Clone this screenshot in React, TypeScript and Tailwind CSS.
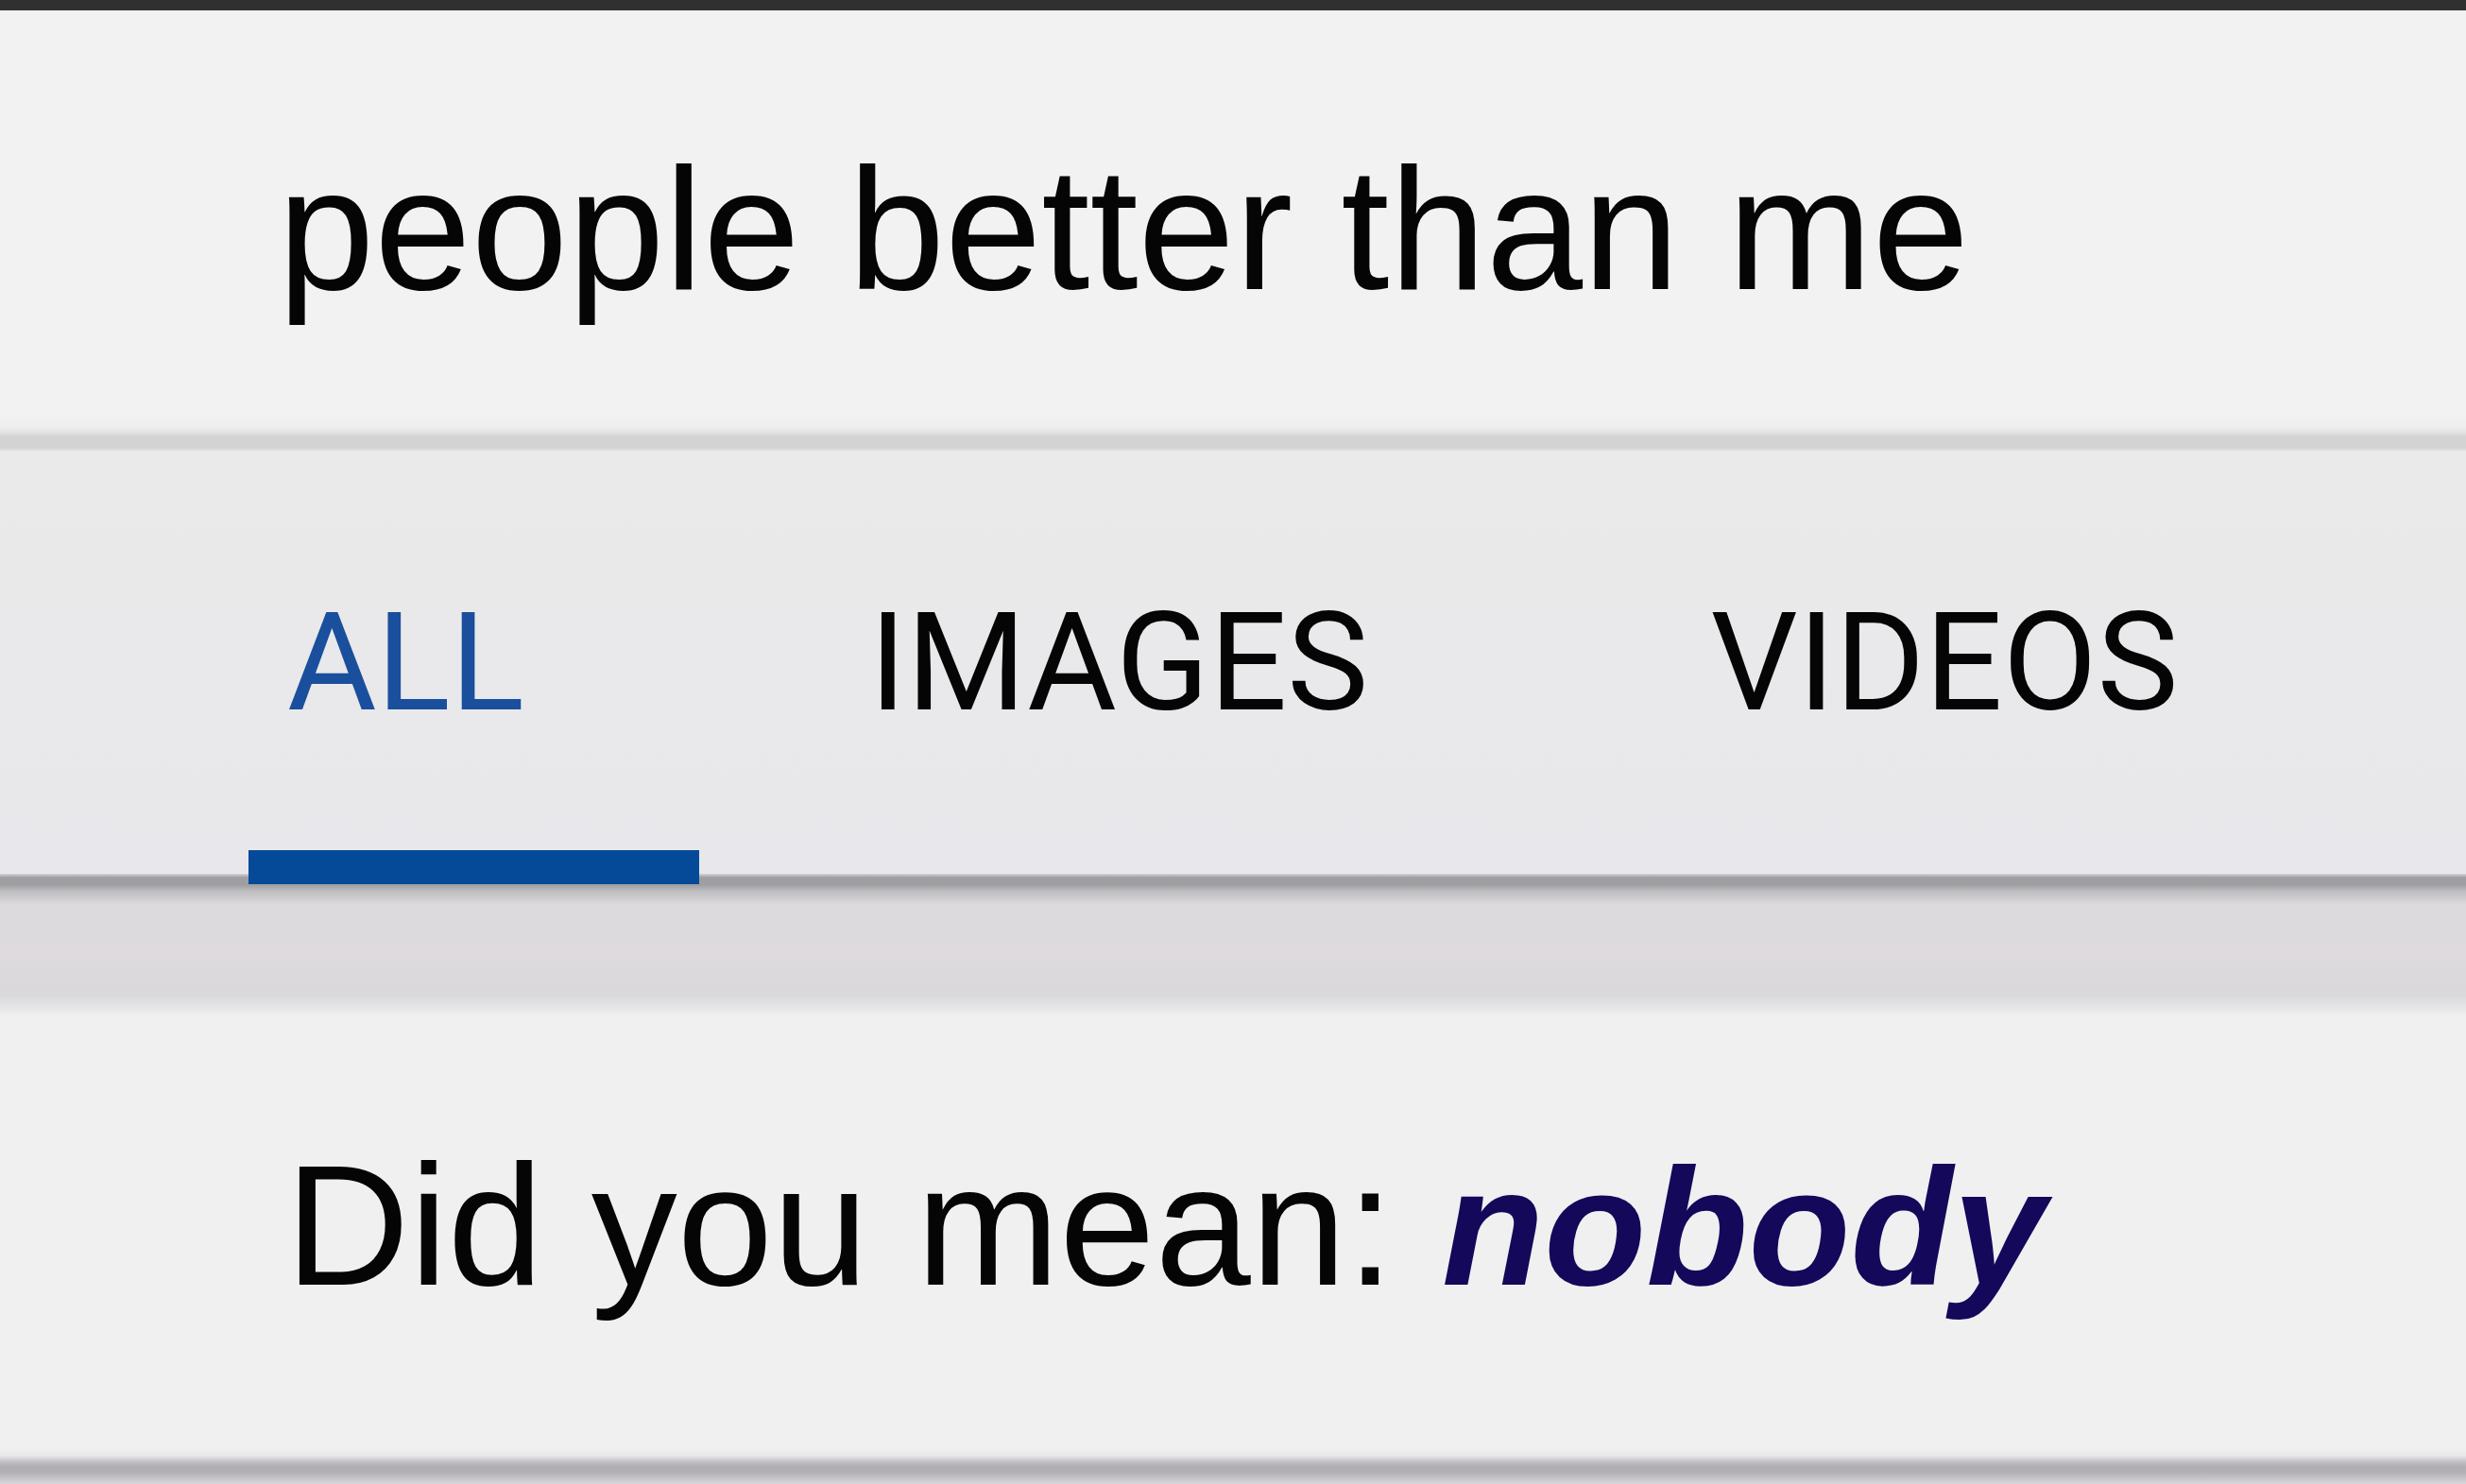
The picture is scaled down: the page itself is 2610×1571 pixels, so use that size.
export default function App() {
  return (
    <div className="min-h-screen w-full bg-[#f0f0f0] font-['Liberation_Sans',Arial,sans-serif]">
      {/* status strip */}
      <div className="h-[11px] bg-[#303030]" />

      {/* search query */}
      <div className="h-[429px] bg-[#f2f2f2] pl-[294px] pt-[139px]">
        <h1 className="text-[184px] leading-none whitespace-nowrap text-[#050505]">
          people better than me
        </h1>
      </div>
      <div className="h-[38px] bg-[linear-gradient(to_bottom,#f2f2f2_0px,#eeeeee_12px,#e2e2e2_18px,#d3d3d3_22px,#d3d3d3_34px,#e9e9e9_38px)]" />

      {/* tabs */}
      <div className="relative h-[447px] bg-[linear-gradient(to_bottom,#eaeaea,#e8e7eb)] pl-[263px] pt-[151px] font-['Roboto',sans-serif]">
        <div className="flex items-start text-[145px] leading-none whitespace-nowrap">
          <div className="w-[477px] pl-[41px] text-[#1a4f9d]">ALL</div>
          <div className="ml-[180px] text-[#050505]">IMAGES</div>
          <div className="ml-[362px] text-[#050505]">VIDEOS</div>
        </div>
        {/* active tab indicator */}
        <div className="absolute bottom-[-11px] left-[263px] z-10 h-[36px] w-[477px] bg-[#044a98]" />
      </div>
      <div className="h-[150px] bg-[linear-gradient(to_bottom,#d5d5d8_0px,#9f9ea2_4px,#9f9ea2_12px,#bdbcbf_18px,#dcdadd_33px,#dedadd_90px,#d9d8db_128px,#e4e4e6_140px,#efeff1_150px)]" />

      {/* suggestion */}
      <div className="h-[458px] bg-[#f0f0f0] pl-[302px] pt-[131px]">
        <p className="text-[182px] leading-none whitespace-nowrap text-[#050505]">
          Did you mean:{" "}
          <span className="text-[177px] font-bold italic text-[#13085a]">nobody</span>
        </p>
      </div>
      <div className="h-[38px] bg-[linear-gradient(to_bottom,#f0f0f0_0px,#e8e8ea_8px,#c4c2c6_14px,#b0adb3_20px,#b3b0b6_26px,#d8d6da_38px)]" />
    </div>
  );
}
